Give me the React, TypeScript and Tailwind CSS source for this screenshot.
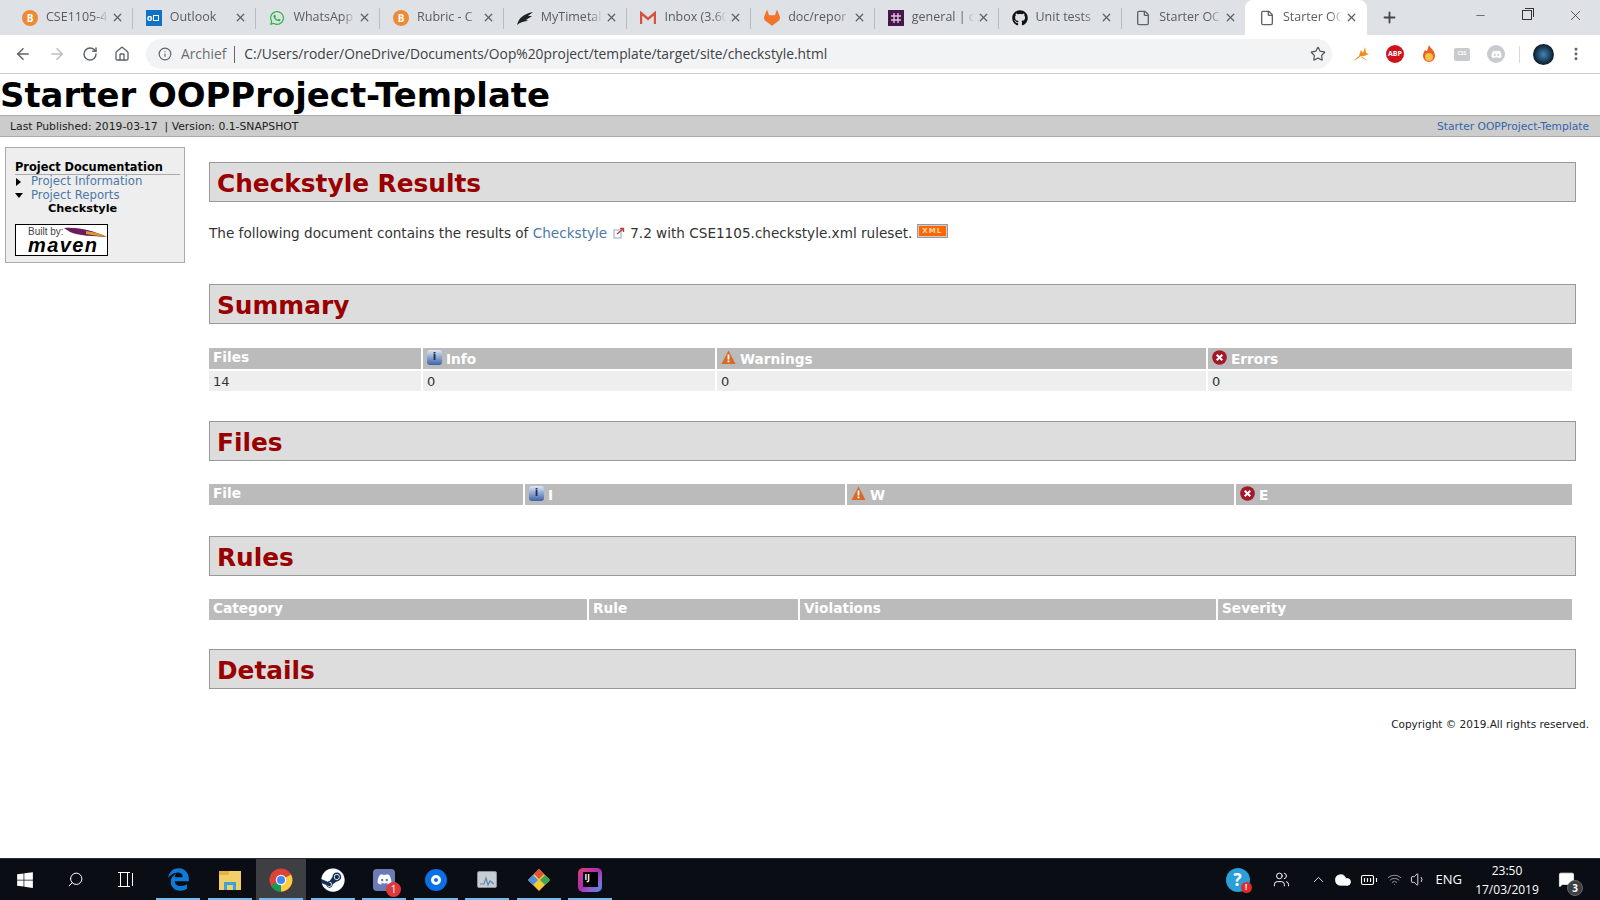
import type { ReactNode } from "react";
import {
  ArrowLeft,
  ArrowRight,
  RotateCw,
  Home,
  Info,
  Star,
  X,
  Plus,
  Minus,
  File,
  MoreVertical,
  Search,
  ChevronUp,
  Cloud,
  Wifi,
  Volume1,
  BatteryFull,
  Users,
  MessageSquare,
} from "lucide-react";
import { FaWhatsapp, FaGitlab, FaSteam, FaDiscord, FaGithub, FaEdgeLegacy, FaWindows } from "react-icons/fa6";

function Brightspace() {
  return (
    <div className="w-[16px] h-[16px] rounded-full bg-[#ee8a35] flex items-center justify-center text-[10px] font-bold text-white leading-none">
      B
    </div>
  );
}

function OutlookIcon() {
  return (
    <div className="w-[16px] h-[16px] bg-[#0f72c5] flex items-center text-[9px] font-bold text-white leading-none pl-[1px]">
      o<span className="ml-[1px] w-[6px] h-[6px] border border-white" />
    </div>
  );
}

function TimetableIcon() {
  return (
    <svg width="18" height="16" viewBox="0 0 18 16">
      <path d="M1 15 C3 8 7 4 17 2 L12 6 L16 6 L10 10 L12 11 C8 11 5 12 1 15Z" fill="#222" />
    </svg>
  );
}

function GmailIcon() {
  return (
    <svg width="16" height="14" viewBox="0 0 16 14">
      <path d="M1 13V2L8 8L15 2V13" fill="none" stroke="#d9503f" strokeWidth="2.4" />
    </svg>
  );
}

function SlackIcon() {
  return (
    <svg width="16" height="16" viewBox="0 0 16 16">
      <rect width="16" height="16" fill="#4a154b" />
      <path d="M3 6H13M3 10H13M6 3V13M10 3V13" stroke="#d8c7d8" strokeWidth="1.4" />
    </svg>
  );
}

const tabs: { title: string; icon: ReactNode }[] = [
  { title: "CSE1105-4", icon: <Brightspace /> },
  { title: "Outlook", icon: <OutlookIcon /> },
  { title: "WhatsApp", icon: <FaWhatsapp size={16} className="text-[#25b83f]" /> },
  { title: "Rubric - C", icon: <Brightspace /> },
  { title: "MyTimetal", icon: <TimetableIcon /> },
  { title: "Inbox (3.60", icon: <GmailIcon /> },
  { title: "doc/repor", icon: <FaGitlab size={16} className="text-[#f0752b]" /> },
  { title: "general | c", icon: <SlackIcon /> },
  { title: "Unit tests", icon: <FaGithub size={16} className="text-[#111]" /> },
  { title: "Starter OC", icon: <File size={16} className="text-[#5f6368]" /> },
];

function Tab({ title, icon, active }: { title: string; icon: ReactNode; active?: boolean }) {
  return (
    <div
      className={
        active
          ? "w-[122px] -ml-px h-[35px] shrink-0 flex items-center pl-[13px] pr-[9px] bg-white rounded-t-lg"
          : "w-[123.7px] h-[35px] shrink-0 flex items-center pl-[12px] pr-[8px] border-r border-[#b8bbc0] [border-image:linear-gradient(transparent_25%,#b8bbc0_25%,#b8bbc0_80%,transparent_80%)_1]"
      }
    >
      <div className="w-[18px] flex justify-center shrink-0">{icon}</div>
      <div className="ml-[7px] w-[68px] whitespace-nowrap text-[12.5px] text-[#5a5c60] [mask-image:linear-gradient(to_right,black_76%,transparent_96%)]">
        {title}
      </div>
      <X size={13} strokeWidth={2.4} className="ml-auto text-[#5f6368] shrink-0" />
    </div>
  );
}

function TabStrip() {
  return (
    <div className="h-[35px] bg-[#dee1e6] flex pl-[9px] font-['Open_Sans',sans-serif]">
      {tabs.map((t) => (
        <Tab key={t.title} title={t.title} icon={t.icon} />
      ))}
      <Tab title="Starter OC" icon={<File size={16} className="text-[#5f6368]" />} active />
      <div className="w-[46px] flex items-center justify-center">
        <Plus size={17} strokeWidth={2.6} className="text-[#45474a]" />
      </div>
      <div className="ml-auto flex items-start text-[#333]">
        <div className="w-[46px] h-[30px] flex items-center justify-center">
          <Minus size={13} strokeWidth={1.2} />
        </div>
        <div className="w-[47px] h-[30px] flex items-center justify-center">
          <div className="relative w-[10px] h-[10px] border border-[#333]">
            <span className="absolute -top-[3px] -right-[3px] w-[9px] h-[9px] border-t border-r border-[#333]" />
          </div>
        </div>
        <div className="w-[50px] h-[30px] flex items-center justify-center">
          <X size={17} strokeWidth={1.1} />
        </div>
      </div>
    </div>
  );
}

function Toolbar() {
  return (
    <div className="h-[39px] bg-white border-b border-[#ccc] flex items-center font-['Open_Sans',sans-serif] text-[#5f6368]">
      <div className="w-[146px] shrink-0 flex items-center pl-[14px] gap-[16px]">
        <ArrowLeft size={18} strokeWidth={2} />
        <ArrowRight size={18} strokeWidth={2} className="text-[#bcbfc3]" />
        <RotateCw size={16} strokeWidth={2.2} />
        <Home size={16} strokeWidth={2} />
      </div>
      <div className="w-[1186px] h-[30px] rounded-full bg-[#f1f3f4] flex items-center pl-[12px] pr-[6px] text-[13.8px]">
        <Info size={14} strokeWidth={2} />
        <span className="ml-[9px] text-[#6a6d70]">Archief</span>
        <span className="ml-[8px] mr-[9px] w-px h-[17px] bg-[#666]" />
        <span className="text-[#404246]">C:/Users/roder/OneDrive/Documents/Oop%20project/template/target/site/checkstyle.html</span>
        <Star size={16} strokeWidth={1.8} className="ml-auto mr-[0px] text-[#555]" />
      </div>
      <div className="flex items-center flex-1 pl-[20px]">
        <svg width="18" height="16" viewBox="0 0 18 16" className="mr-[16px]">
          <path d="M1 15 L7 10 L9 4 L11 7 L13 1 L14 7 L17 8 L12 10 L9 10 L5 13Z M9 10 L16 15 L10 12Z" fill="#f28a1e" />
        </svg>
        <div className="w-[18px] h-[18px] rounded-full bg-[#d0121c] text-white text-[7px] font-bold flex items-center justify-center mr-[17px]">
          ABP
        </div>
        <svg width="16" height="18" viewBox="0 0 16 18" className="mr-[17px]">
          <path d="M8 0 C9 3 14 5 14 11 A6 6 0 0 1 2 11 C2 8 3 7 4 5 C5 6 6 6 6 6 C7 4 7 2 8 0Z" fill="#e8611d" />
          <circle cx="8" cy="12" r="4" fill="#f7c04a" />
        </svg>
        <div className="w-[16px] h-[13px] bg-[#c9cbce] rounded-[2px] text-white text-[5px] font-bold flex items-center justify-center mr-[17px]">
          CSS
        </div>
        <div className="w-[18px] h-[18px] rounded-full bg-[#c9cbce] flex items-center justify-center mr-[14px]">
          <FaDiscord size={11} className="text-white" />
        </div>
        <span className="w-px h-[17px] bg-[#d5d7da] mr-[13px]" />
        <div className="w-[21px] h-[21px] rounded-full bg-[radial-gradient(circle,#3f87b8,#0b1a2a_70%)] mr-[14px]" />
        <MoreVertical size={16} strokeWidth={2.4} className="text-[#5f6368]" />
      </div>
    </div>
  );
}

function SectionTitle({ children }: { children: ReactNode }) {
  return (
    <h2 className="h-[40px] pt-[4px] px-[7px] flex items-center bg-[#ddd] border border-[#999] text-[#900] text-[24.8px] font-bold leading-none">
      {children}
    </h2>
  );
}

function InfoIcon() {
  return (
    <span className="inline-flex w-[15px] h-[15px] rounded-[3px] bg-gradient-to-b from-[#dfe7f3] to-[#3d63a5] items-center justify-center text-[10px] font-bold text-[#16305f] leading-none">
      i
    </span>
  );
}

function WarnIcon() {
  return (
    <svg width="15" height="15" viewBox="0 0 15 15" className="inline-block">
      <path d="M7.5 0.5 L14.5 14 H0.5Z" fill="#d96a25" />
      <rect x="6.6" y="4.5" width="1.8" height="5" fill="#fff" />
      <rect x="6.6" y="10.5" width="1.8" height="1.8" fill="#fff" />
    </svg>
  );
}

function ErrorIcon() {
  return (
    <svg width="15" height="15" viewBox="0 0 15 15" className="inline-block">
      <circle cx="7.5" cy="7.5" r="7.3" fill="#a5182a" />
      <path d="M4.7 4.7L10.3 10.3M10.3 4.7L4.7 10.3" stroke="#fff" strokeWidth="2" />
    </svg>
  );
}

function Th({ children, icon }: { children: ReactNode; icon?: ReactNode }) {
  return (
    <div className="h-[21px] bg-[#bbb] text-white font-bold text-[13.7px] pl-[4px] flex items-center gap-[4px] leading-none">
      {icon && <span className="flex -mt-[3px]">{icon}</span>}
      <span className={icon ? "mt-[3px]" : "-mt-[1px]"}>{children}</span>
    </div>
  );
}

function Td({ children }: { children: ReactNode }) {
  return <div className="h-[20px] bg-[#eee] text-[13px] text-[#333] pl-[4px] flex items-center leading-none">{children}</div>;
}

function Sidebar() {
  return (
    <aside className="w-[180px] h-[116px] bg-[#eee] border border-[#aaa] pl-[9px] pr-[4px] pt-[12px] text-[11.7px] leading-[13.5px]">
      <div className="font-bold text-[#000] border-b border-[#aaa] text-[11.4px] leading-[14px] whitespace-nowrap">Project Documentation</div>
      <div className="flex items-center">
        <span className="w-0 h-0 ml-[1px] border-y-[4px] border-y-transparent border-l-[5px] border-l-[#000]" />
        <a className="ml-[10px] text-[#4c78a8]">Project Information</a>
      </div>
      <div className="flex items-center">
        <span className="w-0 h-0 border-x-[4px] border-x-transparent border-t-[5px] border-t-[#000]" />
        <a className="ml-[8px] text-[#4c78a8]">Project Reports</a>
      </div>
      <div className="pl-[33px] font-bold text-[#000] text-[11.3px]">Checkstyle</div>
      <div className="mt-[8px] w-[93px] h-[32px] bg-white border border-black relative overflow-hidden font-['Liberation_Sans',sans-serif]">
        <span className="absolute left-[12px] top-[1px] text-[10px] leading-[12px] text-[#444]">Built by:</span>
        <svg width="44" height="12" viewBox="0 0 44 12" className="absolute left-[48px] top-[2px]">
          <path d="M0 1 C12 0 28 3 43 10 C30 9 14 9 6 5Z" fill="#6a1c5c" />
          <path d="M22 4 C30 5 38 7 43 10 C34 9 27 8 22 7Z" fill="#d9982f" />
        </svg>
        <span className="absolute left-[12px] top-[10px] text-[20px] leading-[20px] font-black italic text-black tracking-[1.4px]">maven</span>
      </div>
    </aside>
  );
}

function Page() {
  return (
    <div className="flex-1 min-h-0 bg-white font-['DejaVu_Sans',sans-serif] text-[#333]">
      <h1 className="h-[41px] text-[33.9px] font-bold text-black leading-[44px] whitespace-nowrap">Starter OOPProject-Template</h1>
      <div className="h-[22px] pt-[2px] bg-[#ccc] border-y border-[#aaa] flex items-center justify-between pl-[10px] pr-[11px] text-[10.7px] text-[#222]">
        <span className="text-[10.8px]">Last Published: 2019-03-17&nbsp; | Version: 0.1-SNAPSHOT</span>
        <a className="text-[#36a]">Starter OOPProject-Template</a>
      </div>
      <div className="flex pl-[5px] pr-[24px] pt-[10px]">
        <Sidebar />
        <main className="flex-1 ml-[24px] pt-[15px]">
          <SectionTitle>Checkstyle Results</SectionTitle>
          <p className="mt-[21px] h-[20px] text-[13.6px] leading-[20px] flex items-center whitespace-pre">
            The following document contains the results of <a className="text-[#4c78a8]">Checkstyle</a>
            <svg width="12" height="12" viewBox="0 0 12 12" className="ml-[6px] mr-[5px]">
              <rect x="1" y="3" width="7" height="8" fill="none" stroke="#9aa3b5" />
              <path d="M4 7L10 2M7 1.5H10.5V5" fill="none" stroke="#b5433d" strokeWidth="1.4" />
            </svg>
            7.2 with CSE1105.checkstyle.xml ruleset.{" "}
            <span className="inline-flex w-[29px] h-[12px] -mt-[4px] ml-[1px] bg-[#f60] border border-[#ccc] outline outline-1 outline-[#999] text-[7px] text-[#ffd9b0] font-bold items-center justify-center tracking-[1px]">
              XML
            </span>
          </p>

          <div className="mt-[41px]">
            <SectionTitle>Summary</SectionTitle>
          </div>
          <div className="mt-[24px] mr-[4px] grid grid-cols-[212px_292px_489px_1fr] gap-[2px]">
            <Th>Files</Th>
            <Th icon={<InfoIcon />}>Info</Th>
            <Th icon={<WarnIcon />}>Warnings</Th>
            <Th icon={<ErrorIcon />}>Errors</Th>
            <Td>14</Td>
            <Td>0</Td>
            <Td>0</Td>
            <Td>0</Td>
          </div>

          <div className="mt-[30px]">
            <SectionTitle>Files</SectionTitle>
          </div>
          <div className="mt-[23px] mr-[4px] grid grid-cols-[314px_320px_387px_1fr] gap-[2px]">
            <Th>File</Th>
            <Th icon={<InfoIcon />}>I</Th>
            <Th icon={<WarnIcon />}>W</Th>
            <Th icon={<ErrorIcon />}>E</Th>
          </div>

          <div className="mt-[31px]">
            <SectionTitle>Rules</SectionTitle>
          </div>
          <div className="mt-[23px] mr-[4px] grid grid-cols-[378px_209px_416px_1fr] gap-[2px]">
            <Th>Category</Th>
            <Th>Rule</Th>
            <Th>Violations</Th>
            <Th>Severity</Th>
          </div>

          <div className="mt-[29px]">
            <SectionTitle>Details</SectionTitle>
          </div>
          <div className="mt-[28px] -mr-[13px] text-right text-[10.5px] text-[#222]">Copyright © 2019.All rights reserved.</div>
        </main>
      </div>
    </div>
  );
}

function TaskSlot({ children, open, active }: { children: ReactNode; open?: boolean; active?: boolean }) {
  return (
    <div className={active ? "w-[50px] mr-[1.5px] h-full relative flex items-center justify-center bg-[#3d3f42]" : "w-[50px] mr-[1.5px] h-full relative flex items-center justify-center"}>
      {children}
      {open && <span className="absolute bottom-0 left-[3px] right-[3px] h-[2px] bg-[#76b9ed]" />}
    </div>
  );
}

function Taskbar() {
  return (
    <div className="h-[42px] bg-[#0a0d14] border-t border-[#2a2c30] flex items-center text-white font-['Open_Sans',sans-serif]">
      <div className="w-[50px] flex justify-center">
        <FaWindows size={18} />
      </div>
      <div className="w-[50px] flex justify-center">
        <Search size={17} strokeWidth={1.4} className="-scale-x-100" />
      </div>
      <div className="w-[50px] flex justify-center">
        <div className="flex gap-[2px] items-center">
          <div className="w-[12px] h-[15px] border-y border-white flex justify-center">
            <span className="w-[8px] h-full border-x border-white" />
          </div>
          <span className="w-px h-[13px] bg-white" />
        </div>
      </div>
      <div className="flex h-full ml-[3px]">
        <TaskSlot open>
          <FaEdgeLegacy size={23} className="text-[#0f7bd6]" />
        </TaskSlot>
        <TaskSlot open active={false}>
          <svg width="24" height="24" viewBox="0 0 24 24">
            <rect x="1" y="3" width="22" height="19" fill="#f2cf68" />
            <rect x="1" y="3" width="10" height="4" fill="#e5b33f" />
            <rect x="6" y="14" width="12" height="8" fill="#3aa4d8" />
            <rect x="9" y="17" width="6" height="5" fill="#f2cf68" />
          </svg>
        </TaskSlot>
        <TaskSlot open active>
          <svg width="24" height="24" viewBox="0 0 24 24">
            <circle cx="12" cy="12" r="11.5" fill="#db4437" />
            <path d="M12 12 L2 18 A11.5 11.5 0 0 0 12 23.5 L22 6.5 L12 12Z" fill="#0f9d58" />
            <path d="M12 12 L22 6.5 A11.5 11.5 0 0 1 12 23.5Z" fill="#ffcd40" />
            <circle cx="12" cy="12" r="5.2" fill="#fff" />
            <circle cx="12" cy="12" r="4" fill="#4285f4" />
          </svg>
        </TaskSlot>
        <TaskSlot open>
          <div className="w-[24px] h-[24px] rounded-full bg-[#12305a] flex items-center justify-center">
            <FaSteam size={24} className="text-white" />
          </div>
        </TaskSlot>
        <TaskSlot open>
          <div className="relative w-[22px] h-[22px] rounded-[4px] bg-[#6a7bb8] flex items-center justify-center">
            <FaDiscord size={15} className="text-white" />
            <span className="absolute -right-[6px] -bottom-[6px] w-[15px] h-[15px] rounded-full bg-[#e0393c] text-[10px] flex items-center justify-center leading-none">1</span>
          </div>
        </TaskSlot>
        <TaskSlot open>
          <div className="w-[22px] h-[22px] rounded-full bg-[#0a6fe8] flex items-center justify-center">
            <span className="w-[10px] h-[10px] rounded-full border-[3px] border-white" />
          </div>
        </TaskSlot>
        <TaskSlot open>
          <div className="w-[20px] h-[17px] bg-[#c8cdd2] border border-[#8b9097] rounded-[2px] flex items-end justify-center">
            <svg width="16" height="12" viewBox="0 0 16 12">
              <path d="M1 9 L5 9 L7 3 L9 10 L11 6 L15 9" fill="none" stroke="#5d86b5" strokeWidth="1.2" />
            </svg>
          </div>
        </TaskSlot>
        <TaskSlot open>
          <svg width="24" height="24" viewBox="0 0 24 24">
            <path d="M12 1 L23 12 L12 23 L1 12Z" fill="#f3c83c" />
            <path d="M12 1 L17 6 L12 11 L7 6Z" fill="#e0523f" />
            <path d="M1 12 L6 7 L11 12 L6 17Z" fill="#4d8fe0" />
            <path d="M13 12 L18 7 L23 12 L18 17Z" fill="#3fa654" />
          </svg>
        </TaskSlot>
        <TaskSlot open>
          <div className="w-[24px] h-[24px] rounded-[5px] bg-gradient-to-br from-[#e0386f] via-[#a92bb8] to-[#2d8fe8] flex items-center justify-center">
            <div className="w-[15px] h-[15px] bg-black text-[8px] font-bold leading-[9px] pl-[2px]">IJ</div>
          </div>
        </TaskSlot>
      </div>

      <div className="ml-auto flex items-center h-full">
        <div className="relative w-[24px] h-[24px] rounded-full bg-[#2a9fd8] flex items-center justify-center text-[17px] font-bold leading-none">
          ?
          <span className="absolute -right-[2px] -bottom-[1px] w-[11px] h-[11px] rounded-full bg-[#e02b2b] text-[8px] flex items-center justify-center">!</span>
        </div>
        <Users size={17} strokeWidth={1.4} className="ml-[23px]" />
        <ChevronUp size={17} strokeWidth={1.2} className="ml-[20px]" />
        <Cloud size={18} fill="white" strokeWidth={1} className="ml-[7px]" />
        <BatteryFull size={18} strokeWidth={1.5} className="ml-[8px]" />
        <Wifi size={15} strokeWidth={1.4} className="ml-[9px] text-[#aaa]" />
        <Volume1 size={17} strokeWidth={1.2} className="ml-[8px]" />
        <span className="ml-[9px] text-[13px]">ENG</span>
        <div className="ml-[12px] w-[66px] text-center text-[12px] leading-[19px]">
          <div>23:50</div>
          <div>17/03/2019</div>
        </div>
        <div className="relative ml-[18px] mr-[25px]">
          <MessageSquare size={17} fill="white" strokeWidth={1} />
          <span className="absolute -right-[8px] -bottom-[8px] w-[16px] h-[16px] rounded-full bg-[#3d3f42] border border-[#666] text-[10px] font-bold flex items-center justify-center leading-none">3</span>
        </div>
      </div>
    </div>
  );
}

export default function App() {
  return (
    <div className="w-[1600px] h-[900px] flex flex-col overflow-hidden">
      <TabStrip />
      <Toolbar />
      <Page />
      <Taskbar />
    </div>
  );
}
